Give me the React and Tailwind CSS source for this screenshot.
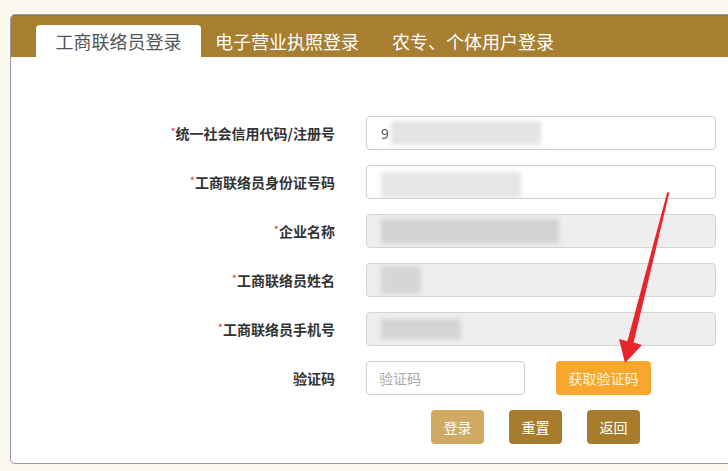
export default function App() {
  const font = { fontFamily: '"Noto Sans CJK SC", "Noto Sans", sans-serif' };
  const rows = [
    { label: "统一社会信用代码/注册号", disabled: false, prefix: "9", block: "ml-[2px] w-[150px] h-[24px] bg-[#e4e4e4]" },
    { label: "工商联络员身份证号码", disabled: false, prefix: "", block: "w-[140px] h-[26px] mt-[6px] bg-[#e6e6e6]" },
    { label: "企业名称", disabled: false ? false : true, prefix: "", block: "w-[178px] h-[24px] bg-[#d2d2d2]" },
    { label: "工商联络员姓名", disabled: true, prefix: "", block: "w-[40px] h-[28px] bg-[#d6d6d6]" },
    { label: "工商联络员手机号", disabled: true, prefix: "", block: "w-[80px] h-[20px] bg-[#d4d4d4]" },
  ];
  return (
    <div className="relative w-[728px] h-[471px] overflow-hidden bg-[#faf7ee] pt-[14px] pl-[10px]" style={font}>
      <div className="w-[760px] h-[450px] border border-[#9a9a9a] rounded-[5px] bg-white overflow-hidden">
        <div className="h-[42px] bg-[#a87e30] border-t border-[#8f7440] flex items-end pl-[25px]">
          <div className="h-[32px] w-[165px] bg-white rounded-t-[4px] flex items-center justify-center text-[18px] text-[#555]">
            工商联络员登录
          </div>
          <div className="h-[32px] flex items-center ml-[14px] text-white text-[18px]">电子营业执照登录</div>
          <div className="h-[32px] flex items-center ml-[33px] text-white text-[18px]">农专、个体用户登录</div>
        </div>
        <div className="pt-[59px] flex flex-col gap-[15px]">
          {rows.map((r, i) => (
            <div key={i} className="flex items-center h-[34px]">
              <div className="w-[324px] text-right text-[14px] font-bold text-[#333]">
                <span className="text-[#e43c3c] font-normal text-[11px] align-top">*</span>
                {r.label}
              </div>
              <div
                className={
                  "ml-[31px] w-[350px] h-[34px] rounded-[4px] border flex items-center pl-[14px] overflow-hidden " +
                  (r.disabled ? "bg-[#eeeeee] border-[#d4d4d4]" : "bg-white border-[#cfcfcf]")
                }
              >
                {r.prefix && <span className="text-[14px] text-[#555]">{r.prefix}</span>}
                <div className={"blur-[2px] " + r.block} />
              </div>
            </div>
          ))}
          <div className="flex items-center h-[34px]">
            <div className="w-[324px] text-right text-[14px] font-bold text-[#333]">验证码</div>
            <div className="ml-[31px] w-[159px] h-[34px] rounded-[4px] border border-[#cfcfcf] bg-white flex items-center pl-[12px] text-[14px] text-[#aaa]">
              验证码
            </div>
            <div className="ml-[31px] w-[95px] h-[34px] rounded-[4px] bg-[#f7a82c] flex items-center justify-center text-[14px] text-[#fdf0d8]">
              获取验证码
            </div>
          </div>
          <div className="flex items-center h-[34px] pl-[420px] gap-[25px]">
            <div className="w-[53px] h-[34px] rounded-[4px] bg-[#d0aa63] flex items-center justify-center text-[14px] text-white">登录</div>
            <div className="w-[53px] h-[34px] rounded-[4px] bg-[#a77c2d] flex items-center justify-center text-[14px] text-white">重置</div>
            <div className="w-[53px] h-[34px] rounded-[4px] bg-[#a77c2d] flex items-center justify-center text-[14px] text-white">返回</div>
          </div>
        </div>
      </div>
      <svg className="absolute left-0 top-0 pointer-events-none" width="728" height="471" viewBox="0 0 728 471">
        <polygon
          points="668,192 669.2,193 633.6,342.6 642,345 625,363 619,339 627.4,341.2 667,193"
          fill="#e8252a"
        />
      </svg>
    </div>
  );
}
